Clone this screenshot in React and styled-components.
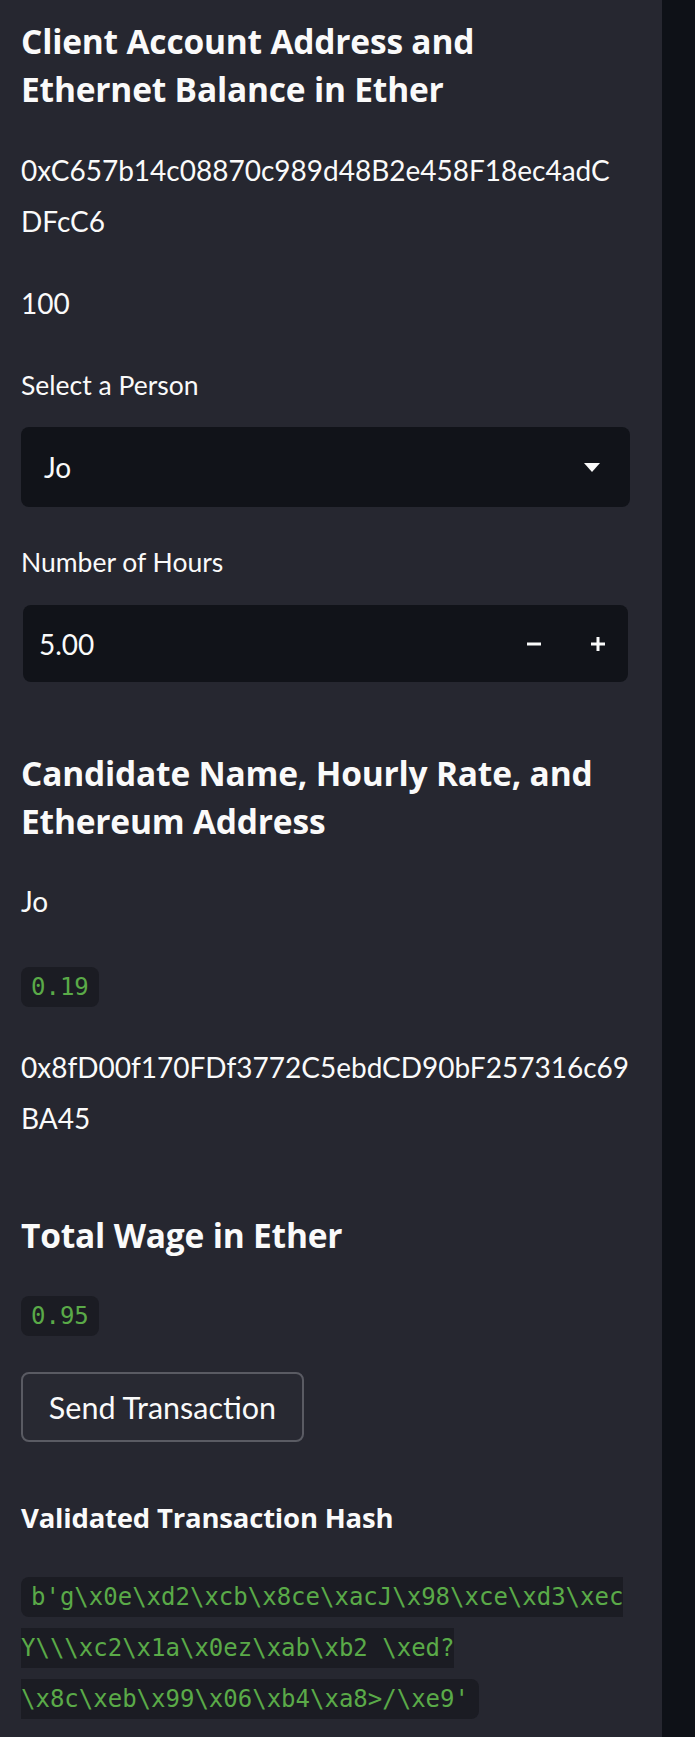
import React from 'react';
import styled, { createGlobalStyle } from 'styled-components';

const GlobalStyle = createGlobalStyle`
  body {
    margin: 0;
    background: #0e1117;
    font-family: Lato, "Open Sans", sans-serif;
    color: #fafafa;
  }
`;

const Layout = styled.div`
  display: flex;
  min-height: 100vh;
`;

const Sidebar = styled.aside`
  width: 662px;
  flex-shrink: 0;
  box-sizing: border-box;
  background: #262730;
  padding: 17px 32px 17px 21px;
  display: flex;
  flex-direction: column;
  align-items: flex-start;
`;

const Main = styled.main`
  flex: 1;
  background: #0e1117;
`;

/* headings keep some room on the right, like the anchor gutter */
const Heading = styled.h2`
  margin: ${(p) => p.$gap || 0}px 0 0;
  padding-right: 16px;
  align-self: stretch;
  font-family: "Open Sans", Lato, sans-serif;
  font-size: ${(p) => (p.$small ? 27.5 : 33.5)}px;
  line-height: ${(p) => (p.$small ? 40 : 48)}px;
  font-weight: 700;
  letter-spacing: -0.2px;
  color: #fafafa;
`;

const Text = styled.p`
  margin: ${(p) => p.$gap}px 0 0;
  font-size: 28px;
  line-height: 51px;
  align-self: stretch;
  overflow-wrap: break-word;
  word-break: break-all;
`;

const CodeLine = styled.p`
  margin: ${(p) => p.$gap}px 0 0;
  font-size: 28px;
  line-height: 51px;
  align-self: stretch;
  overflow-wrap: break-word;
`;

const Code = styled.code`
  font-family: "DejaVu Sans Mono", "Liberation Mono", monospace;
  font-size: 24px;
  line-height: 27px;
  color: #5aaa48;
  background: #1b1c23;
  padding: 6px 10px;
  border-radius: 8px;
`;

const Label = styled.label`
  margin-top: ${(p) => p.$gap}px;
  font-size: 26.5px;
  line-height: 40px;
  color: #fafafa;
`;

const Field = styled.div`
  margin: ${(p) => p.$gap}px ${(p) => p.$inset || 0}px 0;
  align-self: stretch;
  height: ${(p) => p.$h}px;
  box-sizing: border-box;
  background: #111319;
  border-radius: 8px;
  display: flex;
  align-items: center;
  padding: 0 ${(p) => p.$pr}px 0 ${(p) => p.$pl}px;
  font-size: 28px;
  color: #fafafa;
`;

const Value = styled.span`
  flex: 1;
`;

const Steps = styled.div`
  display: flex;
  align-items: center;
  gap: 50px;
`;

const Button = styled.button`
  margin-top: ${(p) => p.$gap}px;
  height: 70px;
  width: 283px;
  box-sizing: border-box;
  background: #282932;
  border: 2px solid #5a5b63;
  border-radius: 8px;
  color: #fafafa;
  font-family: Lato, "Open Sans", sans-serif;
  font-size: 30.5px;
  cursor: pointer;
`;

const Caret = () => (
  <svg width="16" height="9" viewBox="0 0 16 9">
    <polygon points="0,0 16,0 8,9" fill="#fafafa" />
  </svg>
);

const Minus = () => (
  <svg width="14" height="14" viewBox="0 0 14 14">
    <rect x="0" y="5.5" width="14" height="3" fill="#fafafa" />
  </svg>
);

const Plus = () => (
  <svg width="14" height="14" viewBox="0 0 14 14">
    <rect x="0" y="5.5" width="14" height="3" fill="#fafafa" />
    <rect x="5.5" y="0" width="3" height="14" fill="#fafafa" />
  </svg>
);

const hash = "b'g\\x0e\\xd2\\xcb\\x8ce\\xacJ\\x98\\xce\\xd3\\xecY\\\\\\xc2\\x1a\\x0ez\\xab\\xb2 \\xed?\\x8c\\xeb\\x99\\x06\\xb4\\xa8>/\\xe9'";

export default function App() {
  return (
    <>
      <GlobalStyle />
      <Layout>
        <Sidebar>
          <Heading>Client Account Address and Ethernet Balance in Ether</Heading>
          <Text $gap={32}>0xC657b14c08870c989d48B2e458F18ec4adCDFcC6</Text>
          <Text $gap={31}>100</Text>

          <Label $gap={36}>Select a Person</Label>
          <Field $gap={22} $h={80} $pl={23} $pr={30}>
            <Value>Jo</Value>
            <Caret />
          </Field>

          <Label $gap={35}>Number of Hours</Label>
          <Field $gap={23} $h={77} $pl={16} $pr={23} $inset={2}>
            <Value>5.00</Value>
            <Steps>
              <Minus />
              <Plus />
            </Steps>
          </Field>

          <Heading $gap={67}>Candidate Name, Hourly Rate, and Ethereum Address</Heading>
          <Text $gap={31}>Jo</Text>
          <CodeLine $gap={32}>
            <Code>0.19</Code>
          </CodeLine>
          <Text $gap={32}>0x8fD00f170FDf3772C5ebdCD90bF257316c69BA45</Text>

          <Heading $gap={67}>Total Wage in Ether</Heading>
          <CodeLine $gap={29}>
            <Code>0.95</Code>
          </CodeLine>
          <Button $gap={33}>Send Transaction</Button>

          <Heading $gap={56} $small>Validated Transaction Hash</Heading>
          <CodeLine $gap={31}>
            <Code>{hash}</Code>
          </CodeLine>
        </Sidebar>
        <Main />
      </Layout>
    </>
  );
}
